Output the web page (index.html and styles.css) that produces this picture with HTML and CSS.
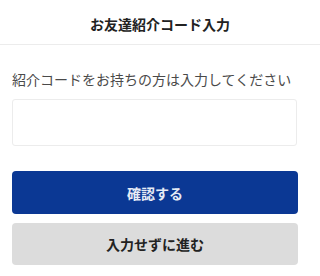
FILE: index.html
```html
<!DOCTYPE html>
<html lang="ja">
<head>
<meta charset="utf-8">
<link rel="stylesheet" href="styles.css">
</head>
<body>
<header class="header">
  <h1 class="title">お友達紹介コード入力</h1>
</header>
<main class="content">
  <p class="label">紹介コードをお持ちの方は入力してください</p>
  <input class="code-input" type="text">
  <button class="btn btn-primary">確認する</button>
  <button class="btn btn-secondary">入力せずに進む</button>
</main>
</body>
</html>
```
FILE: styles.css
```css
* { box-sizing: border-box; }
html, body {
  margin: 0;
  padding: 0;
  background: #ffffff;
  font-family: "Noto Sans CJK JP", "Noto Sans", sans-serif;
}
.header {
  height: 45px;
  border-bottom: 1px solid #ececec;
  display: flex;
  align-items: center;
  justify-content: center;
}
.title {
  margin: 0;
  font-size: 14px;
  font-weight: 700;
  color: #222222;
  line-height: 20px;
  padding-top: 3px;
}
.content {
  padding: 0 13px 0 12px;
  display: flex;
  flex-direction: column;
}
.label {
  margin: 24px 0 0;
  font-size: 14px;
  line-height: 20px;
  color: #4a4a4a;
  white-space: nowrap;
}
.code-input {
  margin-top: 10px;
  height: 47px;
  width: 285px;
  border: 1px solid #ececec;
  border-radius: 3px;
  background: #ffffff;
  outline: none;
}
.btn {
  width: 286px;
  border: none;
  border-radius: 4px;
  font-family: "Noto Sans CJK JP", "Noto Sans", sans-serif;
  font-size: 14px;
  font-weight: 700;
  display: flex;
  align-items: center;
  justify-content: center;
  padding: 0;
}
.btn-primary {
  margin-top: 25px;
  height: 43px;
  background: #0b3894;
  color: #e6ebf5;
}
.btn-secondary {
  margin-top: 9px;
  height: 42px;
  background: #dcdcdc;
  color: #222222;
}
```
